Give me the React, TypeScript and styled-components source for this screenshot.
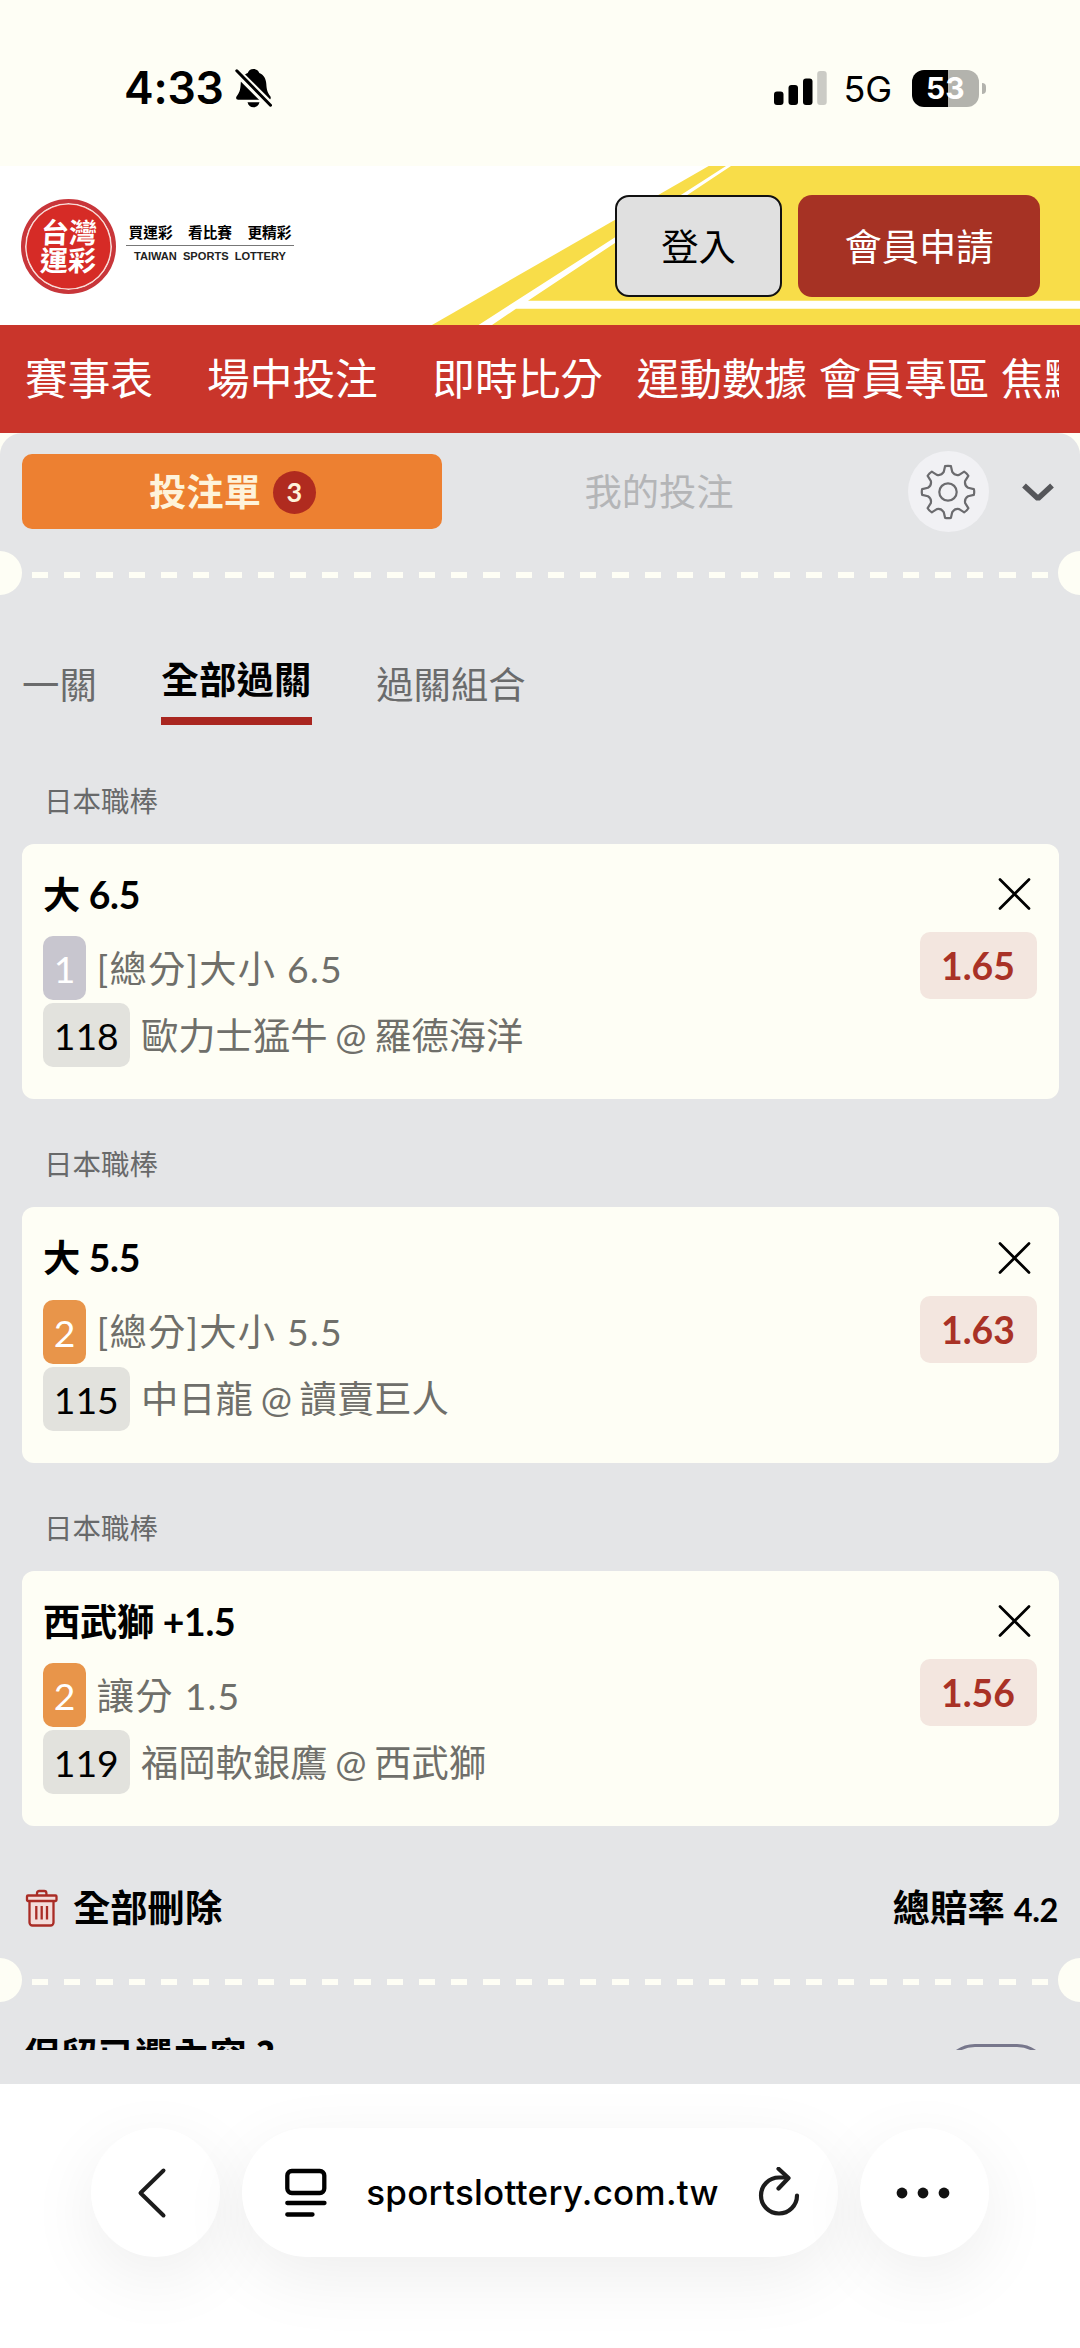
import React from "react";
import styled, { createGlobalStyle } from "styled-components";

const CREAM = "#fefef5";
const PANEL = "#e4e5e7";

const Global = createGlobalStyle`
  * { box-sizing: border-box; }
  body { margin: 0; background: #fff; }
  button { font: inherit; border: 0; padding: 0; margin: 0; background: none; color: inherit; }
`;

const Screen = styled.div`
  width: 1080px;
  height: 2348px;
  overflow: hidden;
  display: flex;
  flex-direction: column;
  font-family: Lato, "Noto Sans CJK TC", sans-serif;
  font-size: 37.3px;
  line-height: 1.4;
  color: #000;
  white-space: nowrap;
`;

/* ---------- status bar ---------- */

const StatusBar = styled.div`
  height: 166px;
  flex: none;
  background: ${CREAM};
  display: flex;
  justify-content: space-between;
  align-items: flex-start;
  padding: 65px 94px 0 124px;
  font-family: Inter, sans-serif;
`;

const StatusGroup = styled.div`
  display: flex;
  align-items: center;
  height: 46px;
`;

const Clock = styled.span`
  font-size: 44.5px;
  font-weight: 600;
  letter-spacing: -0.2px;
  width: 111px;
`;

const Network = styled.span`
  font-size: 36px;
  letter-spacing: -0.2px;
  margin: 2px 0 0 17px;
  width: 68px;
`;

const Battery = styled.div`
  display: flex;
  align-items: center;
  gap: 3px;
`;

const BatteryBody = styled.div`
  width: 67.5px;
  height: 37px;
  border-radius: 12px;
  background: linear-gradient(90deg, #000 54%, #b3b3ad 54%);
  color: #fff;
  font-size: 30px;
  font-weight: 700;
  line-height: 37px;
  text-align: center;
`;

const BatteryTip = styled.div`
  width: 4px;
  height: 11px;
  border-radius: 0 5px 5px 0;
  background: #b3b3ad;
`;

/* ---------- site header ---------- */

const Header = styled.header`
  position: relative;
  height: 159px;
  flex: none;
  display: flex;
  justify-content: space-between;
  align-items: center;
  padding: 1px 40px 0 21px;
  background: #fff;
`;

const HeaderArt = styled.svg`
  position: absolute;
  inset: 0;
`;

const Logo = styled.div`
  position: relative;
  display: flex;
  align-items: center;
  gap: 10px;
`;

const Seal = styled.div`
  width: 95px;
  height: 95px;
  border-radius: 50%;
  background: #d62b26;
  border: 4.5px solid #c8363a;
  box-shadow: inset 0 0 0 1.6px #f8dcd8;
  display: flex;
  flex-direction: column;
  align-items: center;
  justify-content: center;
  color: #fff;
  font-size: 28px;
  font-weight: 700;
  line-height: 28.5px;
`;

const SealLine = styled.span<{ $shift: number }>`
  transform: translateX(${(p) => p.$shift}px) skewX(-3deg);
`;

const Slogan = styled.div`
  display: flex;
  flex-direction: column;
  align-items: center;
  width: 168px;
  padding-bottom: 3px;
`;

const SloganTop = styled.div`
  width: 100%;
  display: flex;
  justify-content: space-between;
  padding: 0 2.5px 3px;
  font-size: 14.7px;
  font-weight: 700;
  line-height: 20px;
  border-bottom: 1.5px solid #777;
`;

const SloganBottom = styled.div`
  font-family: "Liberation Sans", Arial, sans-serif;
  font-size: 11.1px;
  font-weight: 700;
  word-spacing: 3px;
  line-height: 21px;
  color: #222;
`;

const HeaderActions = styled.div`
  position: relative;
  display: flex;
  gap: 16px;
`;

const HeaderButton = styled.button<{ $primary?: boolean }>`
  width: ${(p) => (p.$primary ? 242 : 167)}px;
  height: 101.5px;
  padding-top: 2px;
  border-radius: 14px;
  border: ${(p) => (p.$primary ? "none" : "2.5px solid #111")};
  background: ${(p) => (p.$primary ? "#a63224" : "#e0e0e0")};
  color: ${(p) => (p.$primary ? "#fff" : "#000")};
`;

const Nav = styled.nav`
  height: 108px;
  flex: none;
  background: #c9352b;
  padding: 0 21px 0 25px;
`;

const NavTrack = styled.div`
  display: flex;
  overflow: hidden;
  height: 100%;
  align-items: center;
  color: #fff;
  font-size: 42.7px;
`;

const NavItem = styled.a<{ $gap: number }>`
  flex: none;
  margin-right: ${(p) => p.$gap}px;
`;

/* ---------- bet slip ---------- */

const SlipBackdrop = styled.main`
  flex: none;
  height: 1651px;
  background: ${CREAM};
`;

const Slip = styled.section`
  height: 100%;
  padding-bottom: 34px;
  border-radius: 22px 22px 0 0;
  background: ${PANEL};
`;

const SlipScroll = styled.div`
  height: 100%;
  overflow: hidden;
`;

const SlipTabs = styled.div`
  display: flex;
  align-items: center;
  height: 117px;
  padding: 0 25px 0 22px;
`;

const SlipTab = styled.button<{ $active?: boolean }>`
  width: ${(p) => (p.$active ? 420 : 434)}px;
  height: 75px;
  padding: 1px 0 0 ${(p) => (p.$active ? 1 : 0)}px;
  border-radius: 10px;
  background: ${(p) => (p.$active ? "#ed8031" : "transparent")};
  color: ${(p) => (p.$active ? "#fef3da" : "#b4b5b7")};
  font-weight: ${(p) => (p.$active ? 700 : 400)};
  display: flex;
  align-items: center;
  justify-content: center;
  gap: 12px;
`;

const Count = styled.span`
  width: 43px;
  height: 43px;
  border-radius: 50%;
  background: #b02b1f;
  font-size: 27px;
  line-height: 42px;
  text-align: center;
`;

const GearButton = styled.button`
  width: 81px;
  height: 81px;
  border-radius: 50%;
  background: #f1f1f4;
  display: grid;
  place-items: center;
  margin-left: 31.5px;
`;

const CollapseButton = styled.button`
  margin-left: auto;
  display: flex;
  padding-top: 2px;
`;

const Perforation = styled.div`
  height: 44px;
  display: flex;
  justify-content: space-between;
  align-items: center;
  overflow: hidden;
  margin-top: 1px;

  &::before,
  &::after {
    content: "";
    width: 44px;
    height: 44px;
    border-radius: 50%;
    background: ${CREAM};
    margin: 0 -22px;
  }
`;

const Dashes = styled.div`
  width: 1016px;
  height: 6px;
  margin-top: 4px;
  background: repeating-linear-gradient(90deg, ${CREAM} 0 16.13px, transparent 16.13px 32.25px);
`;

const ModeTabs = styled.div`
  display: flex;
  gap: 64.5px;
  height: 130px;
  padding: 0 22px;
  align-items: flex-end;
`;

const ModeTab = styled.button<{ $active?: boolean }>`
  height: ${(p) => (p.$active ? 76 : 71)}px;
  line-height: 61px;
  padding-bottom: ${(p) => (p.$active ? 7 : 10)}px;
  color: ${(p) => (p.$active ? "#000" : "#6a6b6c")};
  font-size: 37.4px;
  font-weight: ${(p) => (p.$active ? 700 : 400)};
  border-bottom: ${(p) => (p.$active ? "8px solid #a92620" : "none")};
  letter-spacing: ${(p) => (p.$active ? 0.2 : 0)}px;
`;

const LeagueName = styled.h3`
  margin: 0;
  height: 108px;
  padding: 18px 0 0 44px;
  font-size: 28.5px;
  font-weight: 400;
  line-height: 94px;
  color: #68696a;
`;

const Leagues = styled.div`
  padding-top: 10.7px;
`;

const Card = styled.article`
  margin: 0 21.5px;
  height: 255.5px;
  border-radius: 12px;
  background: ${CREAM};
  padding: 22px 22px 0 21.5px;
`;

const CardHead = styled.div`
  display: flex;
  justify-content: space-between;
  align-items: center;
  height: 58px;
  padding-right: 6px;
  margin-bottom: 8.5px;
`;

const Pick = styled.h4`
  margin: 0;
  font-size: 37.3px;
  font-weight: 700;
  letter-spacing: -0.3px;
`;

const CloseButton = styled.button`
  display: flex;
  padding-bottom: 1px;
`;

const CardBody = styled.div`
  display: flex;
  justify-content: space-between;
  align-items: flex-start;
`;

const Details = styled.div`
  display: grid;
  gap: 3px;
  padding-top: 4px;
  color: #6f6f6a;
`;

const Detail = styled.div<{ $spacing?: number; $gap: number; $wordGap?: number }>`
  display: flex;
  align-items: center;
  gap: ${(p) => p.$gap}px;
  height: 64px;
  & > span:last-child {
    padding-top: 1px;
    letter-spacing: ${(p) => p.$spacing ?? 0}px;
    word-spacing: ${(p) => p.$wordGap ?? 0}px;
  }
`;

type Tone = "muted" | "orange" | "code";
const toneColors: Record<Tone, [string, string]> = {
  muted: ["#c8c6cf", "#fff"],
  orange: ["#e8954a", "#fff"],
  code: ["#e2e2dd", "#000"],
};

const Chip = styled.span<{ $tone: Tone }>`
  padding: 0 10.8px;
  height: 64px;
  line-height: 65px;
  border-radius: 10px;
  background: ${(p) => toneColors[p.$tone][0]};
  color: ${(p) => toneColors[p.$tone][1]};
`;

const Odds = styled.div`
  width: 117px;
  height: 67px;
  line-height: 67px;
  border-radius: 10px;
  background: #f3e6df;
  color: #a93226;
  font-weight: 700;
  text-align: center;
`;

const Summary = styled.div`
  display: flex;
  justify-content: space-between;
  align-items: center;
  height: 131px;
  padding: 33px 22px 0 25px;
  font-weight: 700;
`;

const ClearAll = styled.button`
  display: flex;
  align-items: center;
  gap: 15px;
`;

const Total = styled.span`
  small {
    font-size: 32.5px;
    letter-spacing: -0.4px;
  }
`;

const KeepRow = styled.div`
  display: flex;
  justify-content: space-between;
  align-items: flex-start;
  padding: 28px 30px 0 23px;
  font-weight: 700;
`;

const QuestionMark = styled.span`
  font-family: "Noto Sans CJK TC", sans-serif;
  line-height: 1;
`;

const Toggle = styled.div`
  width: 108px;
  height: 66px;
  margin-top: 13.5px;
  border-radius: 33px;
  border: 3px solid #77778c;
`;

/* ---------- browser toolbar ---------- */

const Toolbar = styled.footer`
  flex: 1;
  background: #fff;
  display: flex;
  align-items: flex-start;
  gap: 22px;
  padding: 44px 91px 0;
  font-family: Inter, sans-serif;
`;

const RoundButton = styled.button<{ $nudge: number }>`
  width: 129px;
  height: 129px;
  border-radius: 50%;
  background: #fff;
  display: grid;
  place-items: center;
  padding-right: ${(p) => p.$nudge}px;
  box-shadow: 0 20px 70px rgba(0, 0, 0, 0.07);
`;

const AddressPill = styled.div`
  width: 596px;
  height: 129px;
  border-radius: 65px;
  background: #fff;
  display: flex;
  align-items: center;
  padding: 0 37px 0 42px;
  justify-content: space-between;
  font-size: 35px;
  font-weight: 500;
  letter-spacing: 0.28px;
  box-shadow: 0 20px 70px rgba(0, 0, 0, 0.07);
`;

/* ---------- icons ---------- */

const BellOff = () => (
  <svg width="37" height="40" viewBox="0 0 37 40">
    <path d="M18.5 1c3 0 5 1.6 5.8 4.1 4.7 2 6.7 6 7 10.9.3 6 1.5 9 4 12.2.9 1.2.5 3.6-1.5 3.6H3.2c-2 0-2.7-2.2-1.5-3.6 2.5-3.2 3.7-6.2 4-12.2.3-4.9 2.3-8.9 7-10.9C13.5 2.6 15.5 1 18.5 1Z" />
    <path d="M12.5 34.2h12c-.7 3-3 5-6 5s-5.300-2-6-5Z" />
    <path d="M1 3 36 38" stroke={CREAM} strokeWidth="8" />
    <path d="M1.8 2.8 35.5 37.2" stroke="#000" strokeWidth="3" strokeLinecap="round" />
  </svg>
);

const Signal = () => (
  <svg width="53" height="34" viewBox="0 0 53 34">
    <rect x="0" y="20.5" width="9.5" height="13.5" rx="3" />
    <rect x="14.5" y="14" width="9.5" height="20" rx="3" />
    <rect x="29" y="7.5" width="9.5" height="26.5" rx="3" />
    <rect x="43.2" y="0" width="9.5" height="34" rx="3" fill="#cbcbc5" />
  </svg>
);

const gearPath = (() => {
  const pts: string[] = [];
  const at = (r: number, deg: number) => {
    const a = (deg * Math.PI) / 180;
    return `${(28 + r * Math.sin(a)).toFixed(2)} ${(28 - r * Math.cos(a)).toFixed(2)}`;
  };
  for (let i = 0; i < 8; i++) {
    const c = i * 45;
    pts.push(`${i ? "L" : "M"}${at(26, c - 6.5)} Q${at(26.6, c)} ${at(26, c + 6.5)}`);
    pts.push(`L${at(20.5, c + 12)} Q${at(17.5, c + 22.5)} ${at(20.5, c + 33)}`);
  }
  return pts.join(" ") + "Z";
})();

const Gear = () => (
  <svg width="56" height="56" viewBox="0 0 56 56" fill="none" stroke="#6b6b6e" strokeWidth="2.2" strokeLinejoin="round">
    <path d={gearPath} />
    <circle cx="28" cy="28" r="8.7" />
  </svg>
);

const ChevronDown = () => (
  <svg width="34" height="22" viewBox="0 0 34 22" fill="none" stroke="#55565a" strokeWidth="5.500">
    <path d="M3 3.500 17 16.500 31 3.500" strokeLinejoin="bevel" />
  </svg>
);

const Cross = () => (
  <svg width="33" height="34" viewBox="0 0 33 34" stroke="#000" strokeWidth="2.700" strokeLinecap="round">
    <path d="M2 2.500 31 31.500M31 2.500 2 31.500" />
  </svg>
);

const Trash = () => (
  <svg width="33" height="38" viewBox="0 0 33 38" fill="none" stroke="#a92c26" strokeWidth="2.3" strokeLinejoin="round">
    <path d="M4.5 12v21.5a3 3 0 0 0 3 3h18a3 3 0 0 0 3-3V12" fill="#f3dcda" />
    <rect x="2" y="6.5" width="29.5" height="5.5" rx="1" fill="#f3dcda" />
    <path d="M12 6.5V4.2a2.2 2.2 0 0 1 2.2-2.2h5a2.2 2.2 0 0 1 2.2 2.2v2.3" />
    <path d="M11.3 17v13.500M16.700 17v13.500M22 17v13.500" />
  </svg>
);

const BackIcon = () => (
  <svg width="30" height="52" viewBox="0 0 30 52" fill="none" stroke="#1c1c1c" strokeWidth="4" strokeLinecap="round" strokeLinejoin="round">
    <path d="M26.500 3.500 3.500 26 26.500 48.500" />
  </svg>
);

const PageIcon = () => (
  <svg width="44" height="50" viewBox="0 0 44 50" fill="none" stroke="#000" strokeWidth="4.300" strokeLinecap="round">
    <rect x="3.300" y="3" width="37" height="22" rx="4.500" />
    <path d="M3.300 35H40.500M3.300 46.500H28.500" />
  </svg>
);

const ReloadIcon = () => (
  <svg width="44" height="52" viewBox="0 0 44 52" fill="none" stroke="#1c1c1c" strokeWidth="4.200" strokeLinecap="round" strokeLinejoin="round">
    <path d="M40 28.500A18 18 0 1 1 22 10.500H30" />
    <path d="M21.500 1.800 31.500 11 21.500 21.500" />
  </svg>
);

const DotsIcon = () => (
  <svg width="54" height="12" viewBox="0 0 54 12" fill="#111">
    <circle cx="6" cy="6" r="5.400" />
    <circle cx="27" cy="6" r="5.400" />
    <circle cx="48" cy="6" r="5.400" />
  </svg>
);

/* ---------- data ---------- */

const navItems: [string, number][] = [
  ["賽事表", 54],
  ["場中投注", 54.5],
  ["即時比分", 33.5],
  ["運動數據", 11.5],
  ["會員專區", 11.5],
  ["焦點", 0],
];

const bets: { pick: string; side: string; market: string; code: string; match: string; odds: string }[] = [
  { pick: "大 6.5", side: "1", market: "[總分]大小 6.5", code: "118", match: "歐力士猛牛 @ 羅德海洋", odds: "1.65" },
  { pick: "大 5.5", side: "2", market: "[總分]大小 5.5", code: "115", match: "中日龍 @ 讀賣巨人", odds: "1.63" },
  { pick: "西武獅 +1.5", side: "2", market: "讓分 1.5", code: "119", match: "福岡軟銀鷹 @ 西武獅", odds: "1.56" },
];

export default function App() {
  return (
    <Screen>
      <Global />
      <StatusBar>
        <StatusGroup>
          <Clock>4:33</Clock>
          <BellOff />
        </StatusGroup>
        <StatusGroup>
          <Signal />
          <Network>5G</Network>
          <Battery>
            <BatteryBody>53</BatteryBody>
            <BatteryTip />
          </Battery>
        </StatusGroup>
      </StatusBar>

      <Header>
        <HeaderArt width="1080" height="159" viewBox="0 0 1080 159">
          <path d="M432 159 708.700 0H1080V159Z" fill="#f8dd49" />
          <path d="M478.600 159 726 0H731L528 134.700H1080V142.700H516L492 159Z" fill="#fff" />
        </HeaderArt>
        <Logo>
          <Seal>
            <SealLine $shift={1}>台灣</SealLine>
            <SealLine $shift={0}>運彩</SealLine>
          </Seal>
          <Slogan>
            <SloganTop>
              <span>買運彩</span>
              <span>看比賽</span>
              <span>更精彩</span>
            </SloganTop>
            <SloganBottom>TAIWAN SPORTS LOTTERY</SloganBottom>
          </Slogan>
        </Logo>
        <HeaderActions>
          <HeaderButton>登入</HeaderButton>
          <HeaderButton $primary>會員申請</HeaderButton>
        </HeaderActions>
      </Header>

      <Nav>
        <NavTrack>
          {navItems.map(([label, gap]) => (
            <NavItem key={label} $gap={gap}>
              {label}
            </NavItem>
          ))}
        </NavTrack>
      </Nav>

      <SlipBackdrop>
        <Slip>
          <SlipScroll>
            <SlipTabs>
              <SlipTab $active>
                投注單<Count>3</Count>
              </SlipTab>
              <SlipTab>我的投注</SlipTab>
              <GearButton>
                <Gear />
              </GearButton>
              <CollapseButton>
                <ChevronDown />
              </CollapseButton>
            </SlipTabs>
            <Perforation>
              <Dashes />
            </Perforation>
            <ModeTabs>
              <ModeTab>一關</ModeTab>
              <ModeTab $active>全部過關</ModeTab>
              <ModeTab>過關組合</ModeTab>
            </ModeTabs>
            <Leagues>
              {bets.map((bet) => (
                <React.Fragment key={bet.code}>
                  <LeagueName>日本職棒</LeagueName>
                  <Card>
                    <CardHead>
                      <Pick>{bet.pick}</Pick>
                      <CloseButton>
                        <Cross />
                      </CloseButton>
                    </CardHead>
                    <CardBody>
                      <Details>
                        <Detail $gap={10.5} $spacing={1.25}>
                          <Chip $tone={bet.side === "1" ? "muted" : "orange"}>{bet.side}</Chip>
                          <span>{bet.market}</span>
                        </Detail>
                        <Detail $gap={11.5} $wordGap={-1.8}>
                          <Chip $tone="code">{bet.code}</Chip>
                          <span>{bet.match}</span>
                        </Detail>
                      </Details>
                      <Odds>{bet.odds}</Odds>
                    </CardBody>
                  </Card>
                </React.Fragment>
              ))}
            </Leagues>
            <Summary>
              <ClearAll>
                <Trash />
                全部刪除
              </ClearAll>
              <Total>
                總賠率 <small>4.2</small>
              </Total>
            </Summary>
            <Perforation>
              <Dashes />
            </Perforation>
            <KeepRow>
              <span>
                保留已選內容 <QuestionMark>?</QuestionMark>
              </span>
              <Toggle />
            </KeepRow>
          </SlipScroll>
        </Slip>
      </SlipBackdrop>

      <Toolbar>
        <RoundButton $nudge={7}>
          <BackIcon />
        </RoundButton>
        <AddressPill>
          <PageIcon />
          <span>sportslottery.com.tw</span>
          <ReloadIcon />
        </AddressPill>
        <RoundButton $nudge={3}>
          <DotsIcon />
        </RoundButton>
      </Toolbar>
    </Screen>
  );
}
